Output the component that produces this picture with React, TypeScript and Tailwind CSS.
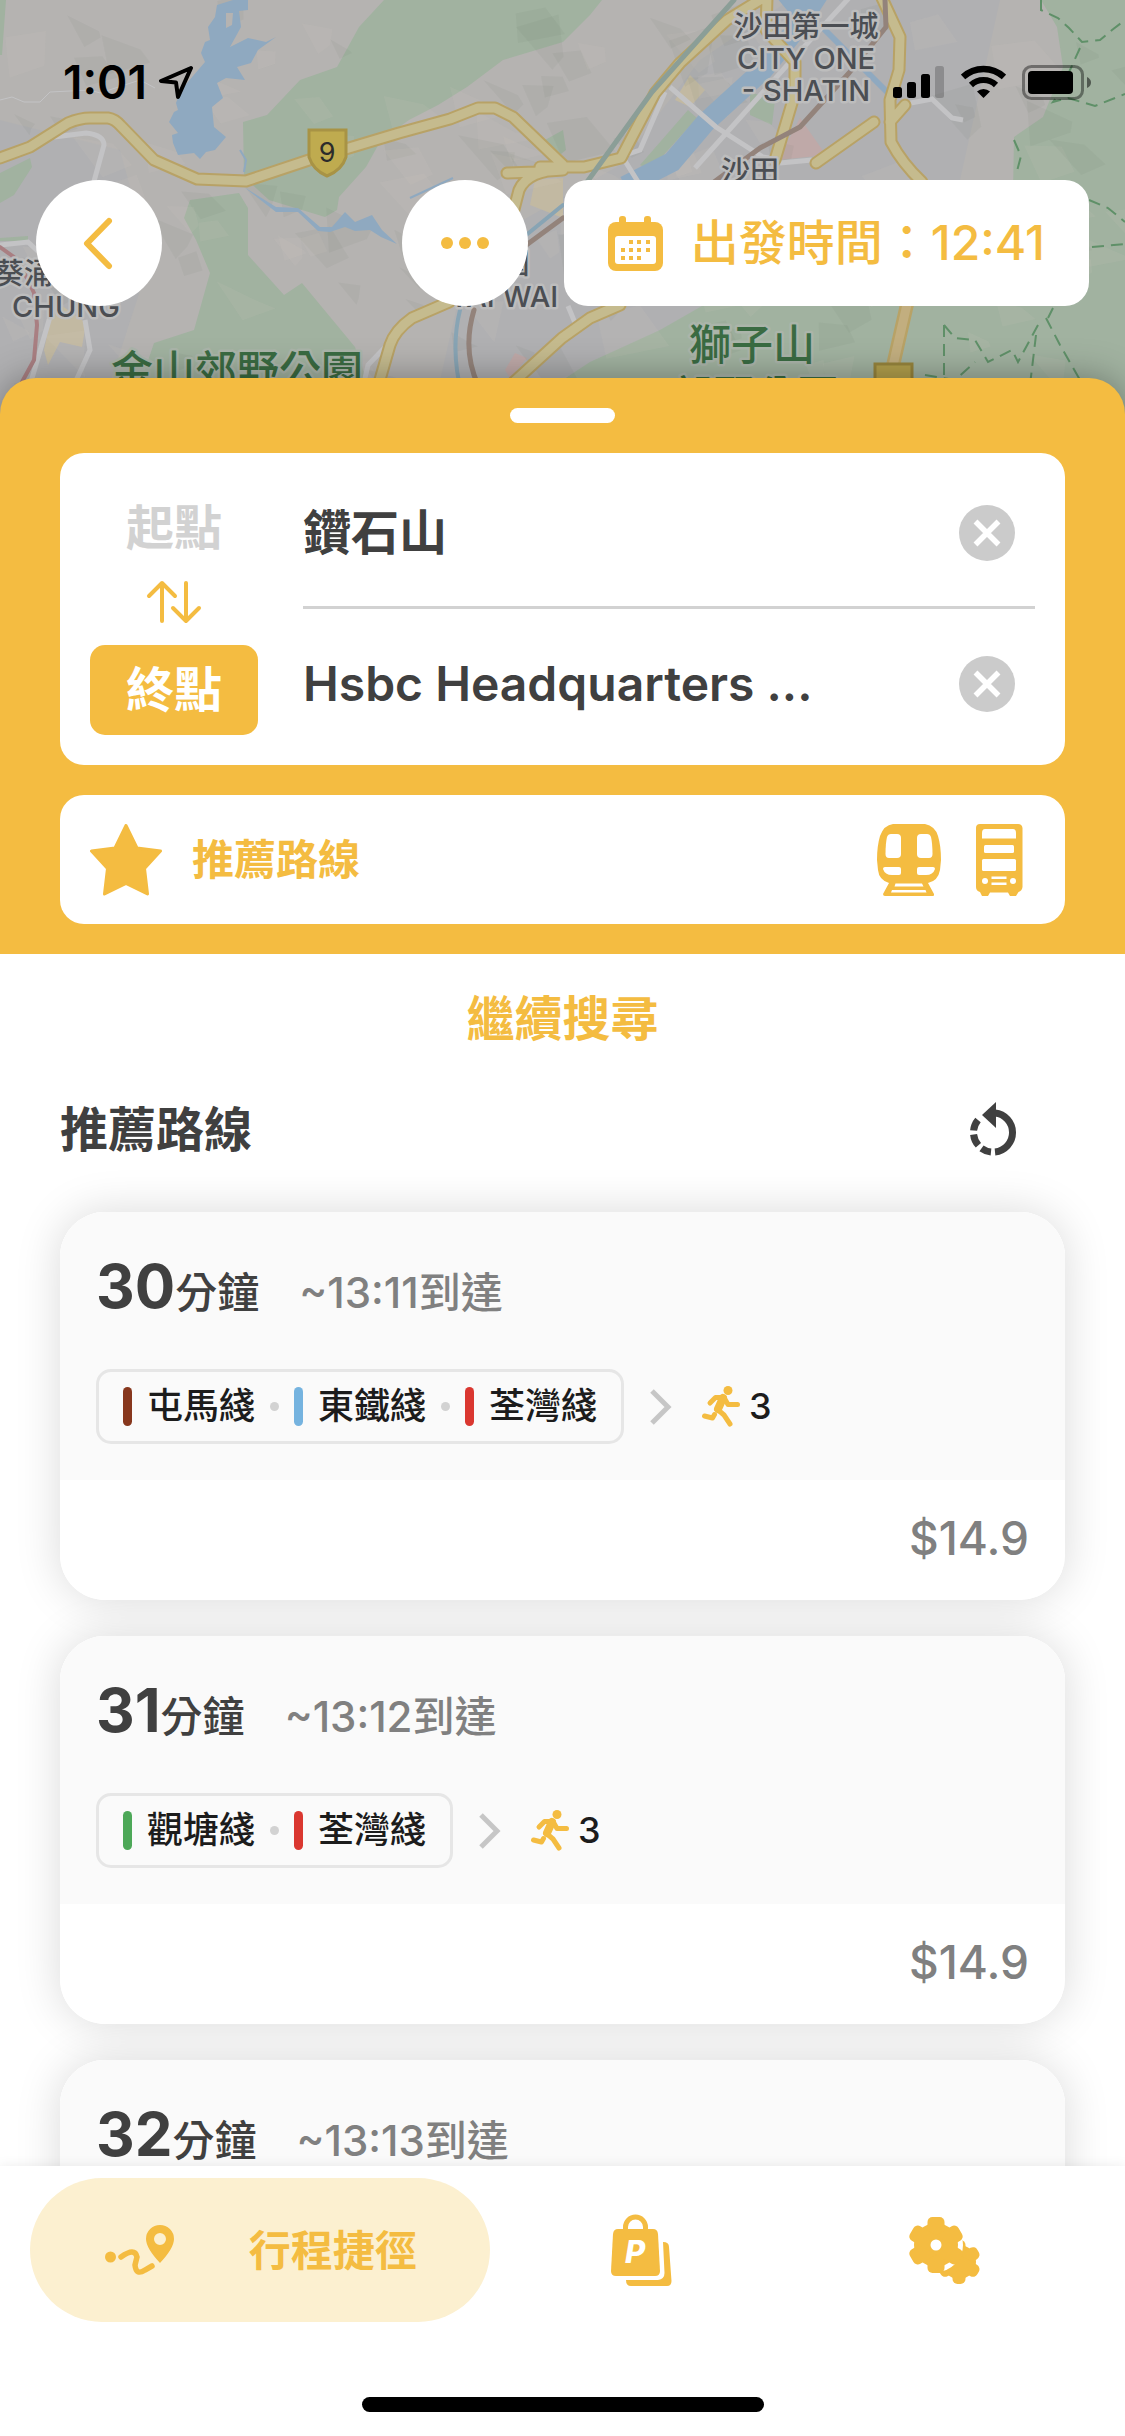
import React, { useState } from 'react';

type Line = { name: string; color: string };
type Trip = { minutes: number; arrival: string; lines: Line[]; walk: number; fare: string };

const tuenMa = { name: '屯馬綫', color: 'bg-[#87371d]' };
const eastRail = { name: '東鐵綫', color: 'bg-[#75b3df]' };
const tsuenWan = { name: '荃灣綫', color: 'bg-[#da3730]' };
const kwunTong = { name: '觀塘綫', color: 'bg-[#4da858]' };

const trips: Trip[] = [
  { minutes: 30, arrival: '13:11', lines: [tuenMa, eastRail, tsuenWan], walk: 3, fare: '$14.9' },
  { minutes: 31, arrival: '13:12', lines: [kwunTong, tsuenWan], walk: 3, fare: '$14.9' },
  { minutes: 32, arrival: '13:13', lines: [], walk: 3, fare: '$14.9' },
];

// terrain shading: small fixed facets scattered over the map
const facets = Array.from({ length: 150 }, (_, i) => {
  const r = (n: number) => Math.abs((Math.sin(i * 12.9898 + n * 78.233) * 43758.5453) % 1);
  const x = r(1) * 1125;
  const y = r(2) * 414;
  const s = 16 + r(3) * 30;
  const points = `${x},${y} ${x + s},${y + s * (r(4) - 0.4)} ${x + s * (0.8 + r(5))},${y + s * 0.7} ${x + s * r(6)},${y + s}`;
  return { points, dark: r(7) > 0.5 };
});

const roads = [
  'M0 158 L30 147 L68 123 Q80 118 90 118 L108 118 Q115 119 121 126 L154 160 L197 179 L246 181 L309 160 L399 133 L450 119 L478 108 H495 L513 117 L563 165',
  'M507 173 L535 172 L563 170 M563 170 Q528 170 519 190 L513 213',
  'M540 167 L584 167 L621 158 L655 93 L680 63 L727 20 L763 -2',
  'M767 -2 L766 30 L795 62 L795 93 L775 160',
  'M882 -2 L900 37 L899 70 L890 100 L891 142 Q902 163 922 182',
  'M874 122 L816 163 M890 122 L905 105',
  'M449 302 L412 318 Q395 330 390 345 L377 390',
  'M620 305 L590 318 L562 338 L505 390',
];

const MapBackground = () => (
  <svg className="absolute inset-0 size-full" viewBox="0 0 1125 414" preserveAspectRatio="xMidYMin slice" aria-hidden="true">
    <rect width="1125" height="414" fill="#b5b3b1" />
    <path d="M620 165 L700 60 L790 0 H1000 L960 180 L760 300 L562 378 L500 414 L440 380 L470 250 Z M0 120 L120 150 L150 260 L100 414 H0 Z" fill="#b0b0b2" />
    <g fill="#a1b2a0">
      <path d="M384 0 H602 L590 15 L563 42 L503 60 L467 87 L438 105 L409 120 L381 140 L366 167 L339 197 L337 210 L325 217 L269 200 L244 177 L243 122 L267 115 L300 80 L337 67 L359 27 Z" />
      <path d="M190 200 L239 193 L248 208 V255 L284 295 L302 283 L355 347 L378 414 H130 L154 343 L194 330 L210 273 L196 240 L184 218 Z" />
      <path d="M1041 0 L1057 27 L1063 67 L1043 117 L1014 137 L1011 306 H702 L660 330 L590 362 L555 385 V414 H1125 V0 Z" />
      <path d="M0 173 L30 158 L32 167 L14 195 L0 203 Z M0 238 L28 236 V241 H0 Z M0 0 H6 L2 55 H0 Z" />
      <path d="M640 165 L688 110 L697 118 L650 170 Z M750 92 L775 100 L772 125 L750 115 Z M563 130 L545 140 L556 158 L566 150 Z" />
    </g>
    <path d="M54 300 L86 323 L82 347 L60 342 L48 365 L44 350 Z M535 180 L563 178 V218 L530 205 Z M675 100 L690 75 L705 90 L690 107 Z" fill="#c2b9a2" />
    <path d="M800 118 L826 155 L778 160 Z M505 370 L515 353 L527 358 L510 378 Z" fill="#bfa9a8" />
    <g>
      {facets.map((f, i) => (
        <polygon key={i} points={f.points} fill={f.dark ? '#5c6258' : '#d6cfc0'} opacity={f.dark ? 0.06 : 0.1} />
      ))}
    </g>
    <g fill="#8fa9c0">
      <path d="M217 5 L233 0 H248 V10 L239 11 L241 27 L230 47 L248 38 L266 42 L276 37 L258 50 L251 63 L237 67 L245 80 L226 78 L217 83 L223 98 L212 107 L214 127 L226 137 L215 150 L206 152 L200 159 L194 153 L178 155 L173 143 L172 135 L178 133 L169 122 L174 112 L178 110 L176 103 L181 90 L205 62 L201 53 L205 42 L210 40 L208 27 L215 17 Z" />
      <path d="M226 13 L233 13 L232 25 L226 28 Z" fill="#b5b3b1" />
      <path d="M244 187 L276 207 L298 208 L320 227 L332 227 L345 212 L355 222 L372 215 L382 230 L397 244 L381 237 L370 230 L355 231 L345 227 L330 232 L318 231 L298 212 L276 212 L258 198 Z" />
      <path d="M777 -2 H828 L815 18 L800 26 Z" />
    </g>
    <g fill="none" stroke="#8fa9c0">
      <path d="M812 10 L763 70 L706 122 L672 162 L625 186" strokeWidth="20" />
      <path d="M820 25 L890 95" strokeWidth="6" />
      <path d="M240 150 L246 160 L244 172 M410 198 L453 178" strokeWidth="2" />
    </g>
    <g fill="none" stroke="#c3c3c5">
      <path d="M54 137 L86 133 Q104 135 104 145 L93 185 M670 87 L716 127 L763 157 L780 160 M849 -2 L790 62 L695 168 M665 92 L640 150 L622 156 L640 185" strokeWidth="5" />
      <path d="M780 163 L812 160 M900 105 L932 99 L952 118 L963 120 M0 245 L28 242 L42 255 M85 320 L90 350 L74 385 M52 310 L30 385 M392 340 L368 365 L360 400 M568 306 L578 330" strokeWidth="5" />
      <path d="M0 100 L12 97 L24 102 L40 102 L50 92 L90 90 L100 93 L140 80 L155 88" strokeWidth="1" />
    </g>
    <g fill="none" strokeLinecap="round" strokeLinejoin="round">
      <path d={roads.join(' ')} stroke="#b8a266" strokeWidth="13" />
      <path d={roads.join(' ')} stroke="#c5bb8e" strokeWidth="9" />
      <path d="M908 300 L892 370" stroke="#b8a266" strokeWidth="14" />
      <path d="M908 300 L892 370" stroke="#c2ae7f" strokeWidth="9" />
      <path d="M734 0 L652 92 L587 182" stroke="#8b9e97" strokeWidth="5" />
      <path d="M885 0 L886 27 L849 73 L800 127 L760 148 L710 185 M563 218 L525 246 M474 310 Q462 350 478 385" stroke="#93837b" strokeWidth="5" />
      <path d="M563 205 L525 236 M460 310 Q450 350 462 395" stroke="#88a4b4" strokeWidth="4" />
      <path d="M0 247 L18 260 L34 293 L37 325 L34 360 L22 382" stroke="#a97f82" strokeWidth="4" />
    </g>
    <g fill="none" stroke="#5f9068" strokeWidth="2" strokeDasharray="12 7">
      <path d="M1041 0 V10 L1058 18 L1069 28 L1082 42 L1100 40 L1112 30 L1125 20" />
      <path d="M1080 48 L1070 70 L1062 90 L1053 102 L1068 98 L1095 106 L1125 94" />
      <path d="M1014 140 L1021 156 L1016 175 M1089 200 L1108 208 L1125 222 M1092 247 L1125 244" />
      <path d="M944 325 V378 M944 325 L955 338 L975 340 L988 362 L1012 350 L1018 362 L1038 325 M1046 318 L1060 345 L1080 380 M925 375 L955 380 L975 362 M1036 335 L1030 385 M1053 308 L1048 318" />
    </g>
    <path d="M309 130 H346 V157 Q342 170 327 176 Q313 170 309 157 Z" fill="#bfab4f" stroke="#a89345" strokeWidth="3" />
    <path d="M875 364 H912 V400 H875 Z" fill="#b3a04c" stroke="#96843c" strokeWidth="3" />
    <g
      className="font-['Inter','Noto_Sans_CJK_TC',sans-serif] font-medium"
      fill="#4b4e53"
      stroke="#bdbdbd"
      strokeWidth="5"
      strokeLinejoin="round"
      paintOrder="stroke"
      textAnchor="middle"
    >
      <text x="327" y="162" fontSize="27" fontWeight="400" fill="#2b2b2b" stroke="none">9</text>
      <text x="806" y="37" fontSize="29">沙田第一城</text>
      <text x="806" y="69" fontSize="29">CITY ONE</text>
      <text x="806" y="101" fontSize="29">- SHATIN</text>
      <text x="750" y="182" fontSize="29">沙田</text>
      <text x="24" y="284" fontSize="29">葵涌</text>
      <text x="66" y="317" fontSize="29">CHUNG</text>
      <text x="515" y="274" fontSize="29">圍</text>
      <text x="504" y="307" fontSize="29">TAI WAI</text>
      <g fill="#3a6b42" fontSize="42" stroke="#abb5aa">
        <text x="752" y="360">獅子山</text>
        <text x="755" y="411">郊野公園</text>
        <text x="237" y="386">金山郊野公園</text>
      </g>
    </g>
  </svg>
);

const StatusBar = () => (
  <div className="flex h-[68px] items-center justify-between pr-[34px] pl-[63px] text-black">
    <div className="flex items-center gap-3">
      <span className="text-[46px] leading-none font-semibold">1:01</span>
      <svg width="35" height="35" viewBox="0 0 35 35" fill="none" stroke="currentColor" strokeWidth="4" strokeLinejoin="round" aria-hidden="true">
        <path d="M32 3 L2 16 L17 17.500 L19 32 Z" />
      </svg>
    </div>
    <div className="flex items-center gap-4">
      <svg width="52" height="34" viewBox="0 0 52 34" fill="currentColor" aria-hidden="true">
        <rect x="0" y="22" width="9" height="11" rx="2.500" />
        <rect x="14" y="17" width="9" height="16" rx="2.500" />
        <rect x="28" y="9" width="9" height="24" rx="2.500" />
        <rect x="42" y="1" width="9" height="32" rx="2.500" opacity="0.2" />
      </svg>
      <svg width="45" height="34" viewBox="0 0 45 34" fill="none" stroke="currentColor" aria-hidden="true">
        <path d="M2 12 A30 30 0 0 1 43 12" strokeWidth="6.500" />
        <path d="M10 20 A18 18 0 0 1 35 20" strokeWidth="6" />
        <path d="M22.500 33 L16 26.500 A9.500 9.500 0 0 1 29 26.500 Z" fill="currentColor" stroke="none" />
      </svg>
      <svg width="69" height="35" viewBox="0 0 69 35" aria-hidden="true">
        <rect x="1.500" y="1.500" width="59" height="32" rx="8" fill="none" stroke="#000" strokeWidth="3" opacity="0.4" />
        <rect x="6" y="6" width="45" height="23" rx="4" />
        <path d="M65 12 Q69 14 69 17.500 Q69 21 65 23 Z" opacity="0.5" />
      </svg>
    </div>
  </div>
);

const CalendarIcon = () => (
  <svg width="55" height="59" viewBox="0 0 55 59" fill="currentColor" aria-hidden="true">
    <rect x="11" y="2" width="7" height="14" rx="3" />
    <rect x="36" y="2" width="7" height="14" rx="3" />
    <rect x="0" y="8" width="55" height="49" rx="8" />
    <rect x="7" y="22" width="41" height="28" rx="3" fill="#fff" />
    <path d="M21 26h4v4h-4z M29 26h4v4h-4z M38 26h4v4h-4z M13 34h4v4h-4z M21 34h4v4h-4z M29 34h4v4h-4z M38 34h4v4h-4z M13 42h4v4h-4z M21 42h4v4h-4z M29 42h4v4h-4z" />
  </svg>
);

const ClearIcon = () => (
  <svg width="56" height="56" viewBox="0 0 56 56" aria-hidden="true">
    <circle cx="28" cy="28" r="28" fill="#cbcbcb" />
    <path d="M16.500 16.500 L39.500 39.500 M39.500 16.500 L16.500 39.500" stroke="#fff" strokeWidth="5.500" />
  </svg>
);

const SwapIcon = () => (
  <svg width="60" height="72" viewBox="0 0 60 72" fill="none" stroke="currentColor" strokeWidth="4" strokeLinecap="round" strokeLinejoin="round" aria-hidden="true">
    <path d="M18 48 V10 M5 23 L18 10 L31 23 M42 10 V48 M29 35 L42 48 L55 35" />
  </svg>
);

const StarIcon = () => (
  <svg width="72" height="72" viewBox="0 0 72 72" fill="currentColor" stroke="currentColor" strokeWidth="3" strokeLinejoin="round" aria-hidden="true">
    <path d="M36 1.500 L47 24 L70.500 27 L54.500 44.500 L57.500 70 L36 59.500 L14.500 70 L17.500 44.500 L1.500 27 L25 24 Z" />
  </svg>
);

const TrainIcon = () => (
  <svg width="72" height="72" viewBox="0 0 72 72" fill="currentColor" aria-hidden="true">
    <path d="M20 0 H52 Q62 2 65 12 Q68 22 68 36 L67 46 Q65 57 55 59 L61 70 Q61.500 72 60 72 H12 Q10 72 10 70 L16 59 Q6 56 5 46 L4 36 Q4 22 7 12 Q11 1 20 0 Z" />
    <g fill="#fff">
      <path d="M18 10 H24 Q28 10 28 14 V30 Q28 34 24 34 H16 Q12.500 34 12.500 30 Q12.500 20 14 13 Q15 10 18 10 Z" />
      <path d="M54 10 H48 Q44 10 44 14 V30 Q44 34 48 34 H56 Q59.500 34 59.500 30 Q59.500 20 58 13 Q57 10 54 10 Z" />
      <path d="M12 43 H26 Q28 43 28 45 V49 Q28 51 26 51 H19 Q12 51 10 45 Q10 43 12 43 Z" />
      <path d="M60 43 H46 Q44 43 44 45 V49 Q44 51 46 51 H53 Q60 51 62 45 Q62 43 60 43 Z" />
      <path d="M22.500 59.500 H49 L50.500 62.500 H21.500 Z M19 66 H52.500 L53.500 68.500 H18 Z" />
    </g>
  </svg>
);

const BusIcon = () => (
  <svg width="72" height="72" viewBox="0 0 72 72" fill="currentColor" aria-hidden="true">
    <path d="M17 0 H55 Q59 0 59.500 4 V63 Q59 67 55.500 68 L53 72 H47 L45 68.500 H27 L25 72 H19 L17 68 Q13 67 13 63 V4 Q13 0 17 0 Z" />
    <g fill="#fff">
      <path d="M22 5 H50 Q53 5 53 9 V14.500 H19 V9 Q19 5 22 5 Z" />
      <rect x="21" y="21" width="30" height="8" rx="1.500" />
      <rect x="19" y="35" width="34" height="12" rx="1.500" />
      <circle cx="22" cy="57" r="3" />
      <circle cx="50" cy="57" r="3" />
      <rect x="28.500" y="52.500" width="15" height="2.500" />
      <rect x="28.500" y="58.500" width="15" height="2.500" />
    </g>
  </svg>
);

const RefreshIcon = () => (
  <svg width="48" height="56" viewBox="0 0 48 56" aria-hidden="true">
    <g fill="none" stroke="currentColor" strokeWidth="7">
      <path d="M26 11.100 A19.500 19.500 0 0 1 26 49.900" />
      <path d="M22 49.900 A19.500 19.500 0 0 1 12.500 46.300" />
      <path d="M9.400 43.300 A19.500 19.500 0 0 1 4.600 32.500" />
      <path d="M4.600 28.500 A19.500 19.500 0 0 1 9 18" />
    </g>
    <path d="M27 0 V26 L13 13 Z" fill="currentColor" />
  </svg>
);

const RunnerIcon = () => (
  <svg width="39" height="41" viewBox="0 0 39 41" fill="none" stroke="currentColor" strokeWidth="5" strokeLinecap="round" strokeLinejoin="round" aria-hidden="true">
    <circle cx="26" cy="4.500" r="4.500" fill="currentColor" stroke="none" />
    <path d="M8 17 L13.500 11.500 H22 L26 18.500 H35.500" />
    <path d="M21 12 L16 23" strokeWidth="8" />
    <path d="M15 23 L22 29 L28 38 M12.500 28.500 L10.500 32 L2.500 30" />
  </svg>
);

const RouteIcon = () => (
  <svg width="72" height="72" viewBox="0 0 72 72" aria-hidden="true">
    <circle cx="7.500" cy="43" r="5.500" fill="currentColor" />
    <path d="M18 43 Q32 33 34 43 L32 51 Q33 62 42 56 L49 52" fill="none" stroke="currentColor" strokeWidth="5.500" strokeLinecap="round" />
    <path d="M57 49 Q43 34 43 25 A14 14 0 0 1 71 25 Q71 34 57 49 Z M57 19 A6 6 0 1 0 57 31 A6 6 0 1 0 57 19 Z" fill="currentColor" fillRule="evenodd" />
  </svg>
);

const BagIcon = () => (
  <svg width="72" height="72" viewBox="0 0 72 72" fill="currentColor" aria-hidden="true">
    <path d="M20.500 18 V13 A10 10 0 0 1 40.500 13 V18" fill="none" stroke="currentColor" strokeWidth="5" />
    <path d="M13 15 H48 Q52.500 15 53 20 L55 57 Q55 62 50 62 H11 Q6 62 6 57 L8 20 Q8.500 15 13 15 Z" />
    <path d="M58 28 Q64 28 64 33 L66.500 67 Q66.500 72 62 72 H26 Q21 72 21 66 H53 Q59.500 65 59.500 59 Z" />
    <text x="30" y="49" fontSize="31" textAnchor="middle" fill="#fff" className="font-['Inter',sans-serif] font-extrabold italic">P</text>
  </svg>
);

const Teeth = ({ cx, cy, width, length }: { cx: number; cy: number; width: number; length: number }) => (
  <>
    {[0, 60, 120].map((angle) => (
      <rect
        key={angle}
        x={cx - width / 2}
        y={cy - length}
        width={width}
        height={length * 2}
        rx="5"
        transform={`rotate(${angle} ${cx} ${cy})`}
      />
    ))}
  </>
);

const GearsIcon = () => (
  <svg width="72" height="72" viewBox="0 0 72 72" fill="currentColor" aria-hidden="true">
    <circle cx="51" cy="48" r="17" />
    <Teeth cx={51} cy={48} width={13} length={22} />
    <circle cx="28" cy="31" r="27" fill="#fff" />
    <g stroke="#fff" strokeWidth="6" paintOrder="stroke">
      <circle cx="28" cy="31" r="22" />
    </g>
    <Teeth cx={28} cy={31} width={17} length={28} />
    <circle cx="28" cy="31" r="5.500" fill="#fff" />
  </svg>
);

const TripCard = ({ trip }: { trip: Trip }) => (
  <article className="rounded-[45px] shadow-[0_0_45px_rgba(0,0,0,0.15)]">
    <div className="relative z-10 overflow-hidden rounded-[45px] bg-white">
      <div className="bg-[#fafafa] px-9 pt-9 pb-9">
        <div className="flex items-baseline gap-10">
          <h3 className="text-[42px] leading-[76px] font-medium text-[#404040]">
            <span className="text-[60px] font-bold">{trip.minutes}</span>分鐘
          </h3>
          <p className="text-[42px] leading-[76px] font-medium text-[#808080]">~{trip.arrival}到達</p>
        </div>
        <div className="mt-[38px] flex items-center text-[36px] leading-[69px] font-medium text-[#1c1c1c]">
          <ul className="flex items-center gap-[15px] rounded-[15px] border-[3px] border-[#e6e6e6] px-6">
            {trip.lines.map((line, i) => (
              <li key={line.name} className="flex items-center gap-[15px]">
                {i > 0 && <span className="size-[9px] rounded-full bg-[#d2d2d2]" />}
                <span className={`h-[39px] w-[9px] rounded-full ${line.color}`} />
                {line.name}
              </li>
            ))}
          </ul>
          <svg className="mx-6" width="24" height="36" viewBox="0 0 24 36" fill="none" stroke="#c6c6c6" strokeWidth="5" aria-hidden="true">
            <path d="M4 2 L20 18 L4 34" />
          </svg>
          <span className="flex items-center gap-2 pl-1.5">
            <span className="text-[#f4bc41]"><RunnerIcon /></span>
            {trip.walk}
          </span>
        </div>
      </div>
      <p className="px-9 pb-1 text-right text-[46px] leading-[116px] font-medium text-[#808080]">{trip.fare}</p>
    </div>
  </article>
);

const App = () => {
  const [origin, setOrigin] = useState('鑽石山');
  const [destination, setDestination] = useState('Hsbc Headquarters ...');

  const swap = () => {
    setOrigin(destination);
    setDestination(origin);
  };

  return (
    <div className="flex h-screen flex-col overflow-hidden bg-white font-['Inter','Noto_Sans_CJK_TC',sans-serif]">
      <header className="relative shrink-0 pt-12 pb-[108px]">
        <MapBackground />
        <div className="relative">
          <StatusBar />
          <div className="mt-16 flex items-center gap-9 px-9 text-[#f4bc41]">
            <button aria-label="返回" className="mr-auto flex size-[126px] items-center justify-center rounded-full bg-white">
              <svg width="54" height="54" viewBox="0 0 54 54" fill="none" stroke="currentColor" strokeWidth="6" strokeLinecap="round" strokeLinejoin="round" aria-hidden="true">
                <path d="M37 5 L15 27.500 L37 50" />
              </svg>
            </button>
            <button aria-label="更多" className="flex size-[126px] items-center justify-center gap-1.5 rounded-full bg-white">
              <span className="size-3 rounded-full bg-[#f4bc41]" />
              <span className="size-3 rounded-full bg-[#f4bc41]" />
              <span className="size-3 rounded-full bg-[#f4bc41]" />
            </button>
            <button className="flex h-[126px] items-center gap-7 rounded-3xl bg-white px-11 text-[48px] leading-none font-medium whitespace-nowrap">
              <CalendarIcon />
              出發時間：12:41
            </button>
          </div>
        </div>
      </header>

      <section className="relative -mt-9 shrink-0 rounded-t-[36px] bg-[#f4bc41] px-[60px] py-[30px] shadow-[0_0_36px_rgba(0,0,0,0.35)]">
        <div className="mx-auto h-[15px] w-[105px] rounded-full bg-white" />

        <form className="mt-[30px] flex gap-[45px] rounded-3xl bg-white px-[30px]">
          <div className="flex w-[168px] shrink-0 flex-col items-center py-[30px] text-[48px] leading-[90px] font-bold">
            <label htmlFor="origin" className="text-[#d2d2d2]">起點</label>
            <button type="button" onClick={swap} aria-label="對調" className="text-[#f4bc41]">
              <SwapIcon />
            </button>
            <label htmlFor="destination" className="w-full rounded-[15px] bg-[#f4bc41] text-center text-white">終點</label>
          </div>
          <div className="min-w-0 flex-1 py-1.5 text-[48px] font-semibold text-[#404040]">
            <div className="flex h-[150px] items-center border-b-[3px] border-[#d2d2d2] pr-5">
              <input id="origin" value={origin} onChange={(e) => setOrigin(e.target.value)} className="min-w-0 flex-1 outline-none" />
              <button type="button" onClick={() => setOrigin('')} aria-label="清除起點">
                <ClearIcon />
              </button>
            </div>
            <div className="flex h-[150px] items-center pr-5">
              <input id="destination" value={destination} onChange={(e) => setDestination(e.target.value)} className="min-w-0 flex-1 outline-none" />
              <button type="button" onClick={() => setDestination('')} aria-label="清除終點">
                <ClearIcon />
              </button>
            </div>
          </div>
        </form>

        <button className="mt-[30px] flex h-[129px] w-full items-center rounded-3xl bg-white px-[30px] text-[42px] font-bold text-[#f4bc41]">
          <StarIcon />
          <span className="mr-auto ml-[30px]">推薦路線</span>
          <span className="flex gap-[18px]">
            <TrainIcon />
            <BusIcon />
          </span>
        </button>
      </section>

      <main className="relative min-h-0 flex-1 overflow-hidden bg-white px-[60px] pt-[30px]">
        <button className="mx-auto block text-[48px] leading-[69px] font-bold text-[#f4bc41]">繼續搜尋</button>
        <div className="mt-[42px] flex items-center justify-between text-[#404040]">
          <h2 className="text-[48px] leading-[69px] font-bold">推薦路線</h2>
          <button aria-label="重新整理" className="mr-12">
            <RefreshIcon />
          </button>
        </div>
        <div className="mt-12 flex flex-col gap-9">
          {trips.map((trip) => (
            <TripCard key={trip.minutes} trip={trip} />
          ))}
        </div>
      </main>

      <nav className="relative z-20 shrink-0 bg-white px-[30px] pt-3 pb-6 shadow-[0_0_12px_rgba(0,0,0,0.08)]">
        <div className="flex h-36 items-center text-[#f4bc41]">
          <a href="#routes" className="flex h-full w-[460px] items-center justify-evenly rounded-full bg-[#fcf0d0] text-[42px] font-bold">
            <RouteIcon />
            行程捷徑
          </a>
          <a href="#shop" aria-label="商店" className="flex flex-1 justify-center">
            <BagIcon />
          </a>
          <a href="#settings" aria-label="設定" className="flex flex-1 justify-center">
            <GearsIcon />
          </a>
        </div>
        <div className="mx-auto mt-[75px] h-[15px] w-[402px] rounded-full bg-black" />
      </nav>
    </div>
  );
};

export default App;
